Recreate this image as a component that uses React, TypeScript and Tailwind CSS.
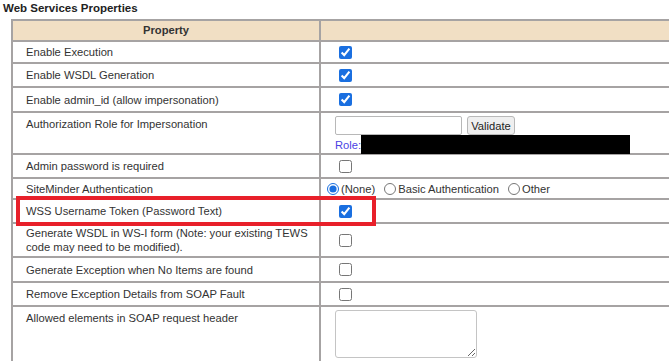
import React from "react";

type RowProps = {
  label: React.ReactNode;
  h: string;
  top?: boolean;
  right?: React.ReactNode;
  rightClass?: string;
};

function Row({ label, h, top = false, right, rightClass = "items-center" }: RowProps) {
  return (
    <div className={`flex border-b-2 border-[#a6a3a3] ${h}`}>
      <div
        className={`w-[308px] shrink-0 border-r-2 border-[#a6a3a3] pl-[13px] pr-[4px] flex text-[#333] leading-[14px] ${
          top ? "items-start pt-[4px]" : "items-center"
        }`}
      >
        <div>{label}</div>
      </div>
      <div className={`flex-1 flex ${rightClass}`}>{right}</div>
    </div>
  );
}

function Check({ checked = false }: { checked?: boolean }) {
  return (
    <input
      type="checkbox"
      defaultChecked={checked}
      className="ml-[18px] w-[13px] h-[13px] accent-[#1a6fe0]"
    />
  );
}

export default function App() {
  return (
    <div className="relative w-[669px] h-[361px] overflow-hidden bg-white font-['Liberation_Sans',Arial,sans-serif] text-[11.2px]">
      <div className="h-[19px] pt-[1px] pl-[3px] leading-[14px] font-bold text-[11.5px] text-[#222]">
        Web Services Properties
      </div>
      <div className="ml-[11px] w-[720px] border-l-2 border-t-2 border-[#a6a3a3]">
        <div className="flex h-[21px] border-b-2 border-[#a6a3a3] bg-[#f1dfc4]">
          <div className="w-[308px] shrink-0 border-r-2 border-[#a6a3a3] flex items-center justify-center font-bold text-[#333]">
            Property
          </div>
          <div className="flex-1" />
        </div>
        <Row h="h-[22px]" label="Enable Execution" right={<Check checked />} />
        <Row h="h-[24px]" label="Enable WSDL Generation" right={<Check checked />} />
        <Row h="h-[25px]" label="Enable admin_id (allow impersonation)" right={<Check checked />} />
        <Row
          h="h-[42px]"
          top
          label="Authorization Role for Impersonation"
          rightClass="items-start"
          right={
            <div className="flex flex-col pl-[14px] pt-[3px]">
              <div className="flex items-center gap-[5px]">
                <input
                  type="text"
                  className="w-[127px] h-[19px] border border-[#b8b8b8] rounded-[2px] bg-white"
                />
                <button className="w-[48px] h-[19px] border border-[#b8b8b8] rounded-[3px] bg-[#efefef] text-[11.2px] text-[#222] leading-[14px]">
                  Validate
                </button>
              </div>
              <div className="flex items-center h-[19px]">
                <span className="text-[#4b3fe4] w-[26px] pt-[2px]">Role:</span>
                <div className="w-[269px] h-[19px] bg-black" />
              </div>
            </div>
          }
        />
        <Row h="h-[24px]" label="Admin password is required" right={<Check />} />
        <Row
          h="h-[21px]"
          label="SiteMinder Authentication"
          right={
            <div className="flex items-center pl-[6px] pt-[2px] text-[#333]">
              <input type="radio" name="sm" defaultChecked className="w-[12px] h-[12px] accent-[#1a6fe0]" />
              <span className="ml-[2px]">(None)</span>
              <input type="radio" name="sm" className="ml-[9px] w-[12px] h-[12px]" />
              <span className="ml-[2px]">Basic Authentication</span>
              <input type="radio" name="sm" className="ml-[9px] w-[12px] h-[12px]" />
              <span className="ml-[2px]">Other</span>
            </div>
          }
        />
        <Row h="h-[24px]" label="WSS Username Token (Password Text)" right={<Check checked />} />
        <Row
          h="h-[34px]"
          label={
            <>
              Generate WSDL in WS-I form (Note: your existing TEWS
              <br />
              code may need to be modified).
            </>
          }
          right={<Check />}
        />
        <Row h="h-[25px]" label="Generate Exception when No Items are found" right={<Check />} />
        <Row h="h-[24px]" label="Remove Exception Details from SOAP Fault" right={<Check />} />
        <Row
          h="h-[60px]"
          top
          label="Allowed elements in SOAP request header"
          rightClass="items-start"
          right={
            <textarea className="ml-[14px] mt-[3px] w-[142px] h-[48px] border border-[#c4c4c4] rounded-[3px]" />
          }
        />
      </div>
      <div className="absolute left-[16px] top-[196px] w-[360px] h-[30px] border-4 border-[#e8202a]" />
    </div>
  );
}
